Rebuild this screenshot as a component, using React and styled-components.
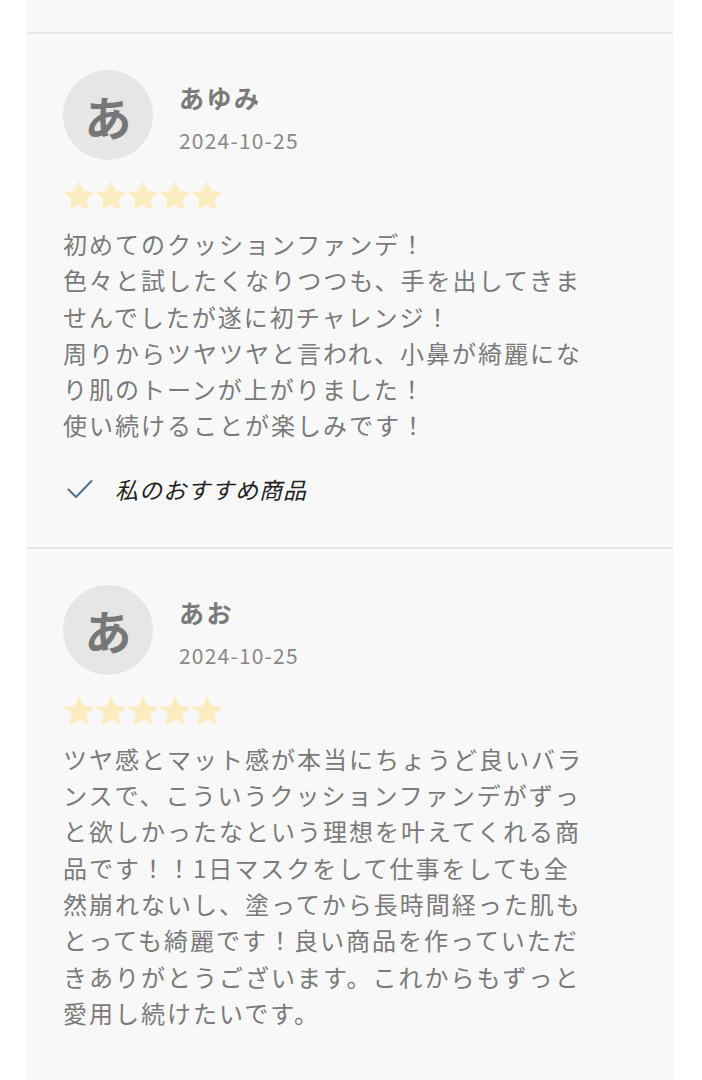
import styled, { createGlobalStyle } from "styled-components";

const GlobalStyle = createGlobalStyle`
  body {
    margin: 0;
    background: #ffffff;
    font-family: "Noto Sans CJK JP", "Noto Sans", sans-serif;
  }
`;

const Panel = styled.div`
  margin-left: 27px;
  width: 646px;
  min-height: 1080px;
  background: #f8f8f8;
`;

const TopSpacer = styled.div`
  height: 32px;
`;

const Review = styled.article`
  border-top: 2px solid #e6e6e6;
  padding: 36px 36px 40px;
`;

const Header = styled.div`
  display: flex;
  align-items: flex-start;
  gap: 26px;
`;

const Avatar = styled.div`
  width: 90px;
  height: 90px;
  border-radius: 50%;
  background: #e6e6e6;
  color: #777777;
  font-size: 47px;
  font-weight: 700;
  display: flex;
  align-items: center;
  justify-content: center;
  flex-shrink: 0;
`;

const Meta = styled.div`
  display: flex;
  flex-direction: column;
  padding-top: 11px;
`;

const Name = styled.div`
  font-size: 25px;
  font-weight: 700;
  color: #7a7a7a;
  letter-spacing: 2.5px;
  line-height: 32px;
`;

const DateText = styled.div`
  margin-top: 13px;
  font-size: 21px;
  color: #888888;
  letter-spacing: 1.2px;
  line-height: 28px;
`;

const Stars = styled.div`
  display: flex;
  margin-top: 20px;
`;

const Body = styled.p`
  margin: 14px 0 0;
  width: 527px;
  font-size: 24px;
  line-height: 36.3px;
  letter-spacing: 2px;
  color: #7a7a7a;
  white-space: pre-line;
  line-break: loose;
`;

const Recommend = styled.div`
  display: flex;
  align-items: center;
  gap: 22px;
  margin-top: 27px;
  padding-left: 4px;
  height: 36px;
`;

const RecommendText = styled.span`
  font-size: 23px;
  font-style: italic;
  color: #222222;
  letter-spacing: 1px;
`;

const Star = () => (
  <svg width="32" height="32" viewBox="1.2 1.2 21.6 21.6">
    <path
      d="M12 1.8l3.1 6.6 7.2.9-5.3 5 1.4 7.1L12 17.9l-6.4 3.5L7 14.3l-5.3-5 7.2-.9z"
      fill="#fdebc2"
    />
  </svg>
);

const Check = () => (
  <svg width="26" height="20" viewBox="0 0 26 20">
    <path
      d="M1.5 10.5l7.5 7.5L24.5 2"
      fill="none"
      stroke="#50728f"
      strokeWidth="2"
      strokeLinecap="round"
      strokeLinejoin="round"
    />
  </svg>
);

const reviews = [
  {
    name: "あゆみ",
    date: "2024-10-25",
    text:
      "初めてのクッションファンデ！\n色々と試したくなりつつも、手を出してきませんでしたが遂に初チャレンジ！\n周りからツヤツヤと言われ、小鼻が綺麗になり肌のトーンが上がりました！\n使い続けることが楽しみです！",
    recommend: true,
  },
  {
    name: "あお",
    date: "2024-10-25",
    text:
      "ツヤ感とマット感が本当にちょうど良いバランスで、こういうクッションファンデがずっと欲しかったなという理想を叶えてくれる商品です！！1日マスクをして仕事をしても全然崩れないし、塗ってから長時間経った肌もとっても綺麗です！良い商品を作っていただきありがとうございます。これからもずっと愛用し続けたいです。",
    recommend: false,
  },
];

const App = () => {
  return (
    <>
      <GlobalStyle />
      <Panel>
        <TopSpacer />
        {reviews.map((r, i) => (
          <Review key={i}>
            <Header>
              <Avatar>{r.name[0]}</Avatar>
              <Meta>
                <Name>{r.name}</Name>
                <DateText>{r.date}</DateText>
              </Meta>
            </Header>
            <Stars>
              {[0, 1, 2, 3, 4].map((s) => (
                <Star key={s} />
              ))}
            </Stars>
            <Body>{r.text}</Body>
            {r.recommend && (
              <Recommend>
                <Check />
                <RecommendText>私のおすすめ商品</RecommendText>
              </Recommend>
            )}
          </Review>
        ))}
      </Panel>
    </>
  );
};

export default App;
